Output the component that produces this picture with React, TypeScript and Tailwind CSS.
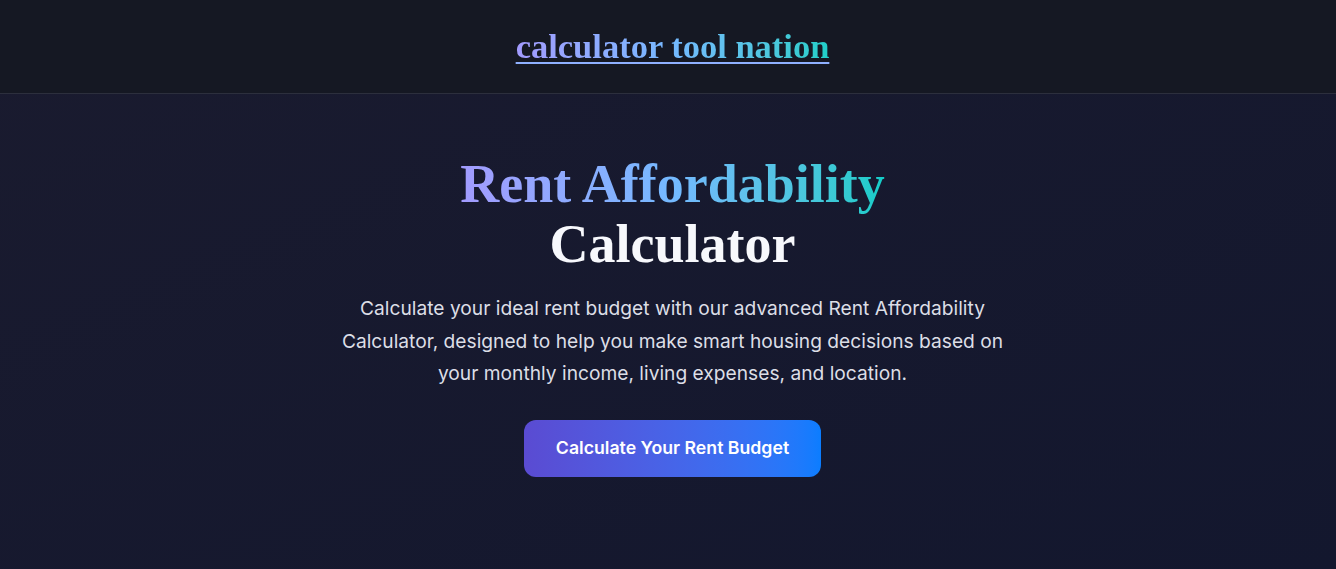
export default function App() {
  return (
    <div className="min-h-screen bg-gradient-to-br from-[#1a1b2f] to-[#13172e] font-['Inter','Noto_Sans',sans-serif] text-[#d8dae3]">
      <header className="h-[94px] flex items-center justify-center pl-[9px] bg-[#151823] border-b border-[#2c2f3d]">
        <a
          href="#"
          className="font-['Liberation_Serif','DejaVu_Serif',serif] text-[34.5px] font-bold leading-none underline decoration-2 underline-offset-[4px] decoration-[#8fb0ff] bg-gradient-to-r from-[#a29bfe] via-[#74b9ff] to-[#1ecfc9] bg-clip-text text-transparent"
        >
          calculator tool nation
        </a>
      </header>

      <main className="flex flex-col items-center pl-[33px] pr-6 pt-[60px] text-center">
        <h1 className="font-['Liberation_Serif','DejaVu_Serif',serif] text-[54px] font-bold leading-[60px] mb-[18px]">
          <span className="bg-gradient-to-r from-[#a29bfe] via-[#74b9ff] to-[#10cdc8] bg-clip-text text-transparent">
            Rent Affordability
          </span>
          <br />
          <span className="text-[#f7f8fc]">Calculator</span>
        </h1>
        <p className="max-w-[690px] text-[19.2px] leading-[32.5px] text-[#dcdee6] mb-[30px]">
          Calculate your ideal rent budget with our advanced Rent Affordability Calculator, designed to help you make smart housing decisions based on your monthly income, living expenses, and location.
        </p>
        <button className="h-[57px] px-8 rounded-xl bg-gradient-to-r from-[#5a4bd2] to-[#0b7dff] text-white text-[17.7px] font-semibold">
          Calculate Your Rent Budget
        </button>
      </main>
    </div>
  )
}
